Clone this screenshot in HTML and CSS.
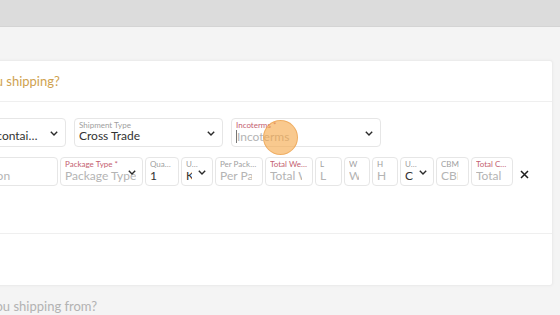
FILE: index.html
```html
<!DOCTYPE html>
<html lang="en">
<head>
    <meta charset="UTF-8">
    <meta name="viewport" content="width=device-width, initial-scale=1.0">
    <title>Shipment Quote</title>
    <link rel="stylesheet" href="styles.css">
</head>
<body>
<div id="topbar"></div>
<div id="page">
    <div class="card">
        <div class="card-head">What are you shipping?</div>
        <div class="card-body">
            <div class="row row-main">
                <div class="field select f-load">
                    <label>Load Type</label>
                    <div class="value">Less than container load</div>
                    <svg class="chevron" width="8" height="5" viewBox="0 0 8 5"><polyline points="0.8,0.8 4,4 7.2,0.8"/></svg>
                </div>
                <div class="field select f-shipment">
                    <label>Shipment Type</label>
                    <div class="value">Cross Trade</div>
                    <svg class="chevron" width="8" height="5" viewBox="0 0 8 5"><polyline points="0.8,0.8 4,4 7.2,0.8"/></svg>
                </div>
                <div class="field select f-incoterms">
                    <label class="required">Incoterms *</label>
                    <input class="value caret" placeholder="Incoterms">
                    <svg class="chevron" width="8" height="5" viewBox="0 0 8 5"><polyline points="0.8,0.8 4,4 7.2,0.8"/></svg>
                </div>
            </div>
            <div class="row row-items">
                <div class="field f-desc">
                    <label>Item</label>
                    <input class="value" placeholder="Description">
                </div>
                <div class="field select f-package">
                    <label class="required">Package Type *</label>
                    <input class="value" placeholder="Package Type">
                    <svg class="chevron" width="8" height="5" viewBox="0 0 8 5"><polyline points="0.8,0.8 4,4 7.2,0.8"/></svg>
                </div>
                <div class="field f-qty">
                    <label>Quantity</label>
                    <input class="value" value="1">
                </div>
                <div class="field select f-unit">
                    <label>Unit</label>
                    <input class="value" value="KG">
                    <svg class="chevron" width="8" height="5" viewBox="0 0 8 5"><polyline points="0.8,0.8 4,4 7.2,0.8"/></svg>
                </div>
                <div class="field f-perpack">
                    <label>Per Package Weight</label>
                    <input class="value" placeholder="Per Package">
                </div>
                <div class="field f-totalw">
                    <label class="required">Total Weight *</label>
                    <input class="value" placeholder="Total Weight">
                </div>
                <div class="field f-dim f-len">
                    <label>L</label>
                    <input class="value" placeholder="L">
                </div>
                <div class="field f-dim">
                    <label>W</label>
                    <input class="value" placeholder="W">
                </div>
                <div class="field f-dim">
                    <label>H</label>
                    <input class="value" placeholder="H">
                </div>
                <div class="field select f-unit f-unit2">
                    <label>Unit</label>
                    <input class="value" value="CM">
                    <svg class="chevron" width="8" height="5" viewBox="0 0 8 5"><polyline points="0.8,0.8 4,4 7.2,0.8"/></svg>
                </div>
                <div class="field f-cbm">
                    <label>CBM</label>
                    <input class="value" placeholder="CBM">
                </div>
                <div class="field f-totalc">
                    <label class="required">Total CBM *</label>
                    <input class="value" placeholder="Total CBM">
                </div>
                <button class="remove">
                    <svg width="9" height="9" viewBox="0 0 9 9"><path d="M1 1 L8 8 M8 1 L1 8"/></svg>
                </button>
            </div>
        </div>
        <div class="card-foot"></div>
    </div>
    <div class="next-section">Where are you shipping from?</div>
</div>
<!-- click highlight -->
<div class="click-dot"></div>
</body>
</html>
```

FILE: styles.css
```css
body {
    font-family: 'Lato', 'Open Sans', sans-serif;
    background-color: #f4f4f4;
    margin: 0;
    padding: 0;
    overflow: hidden;
}

#topbar {
    height: 26px;
    background-color: #dcdcdc;
    border-bottom: 1px solid #d4d4d4;
}

#page {
    margin: 33px 7px 0 -80px;
}

.card {
    background-color: #fff;
    border: 1px solid #ececec;
    border-radius: 3px;
    box-shadow: 0 0 3px rgba(0, 0, 0, 0.04);
}

.card-head {
    height: 40px;
    line-height: 40px;
    padding: 0 12px 0 5px;
    font-size: 13px;
    color: #cfa24f;
    border-bottom: 1px solid #efefef;
}

.card-body {
    padding: 16px 12px 47px;
    border-bottom: 1px solid #efefef;
}

.card-foot {
    height: 51px;
}

.row {
    display: flex;
    align-items: center;
}

.row-main {
    gap: 8px;
    margin-bottom: 10px;
}

.row-items {
    gap: 2px;
}

.field {
    position: relative;
    height: 29px;
    box-sizing: border-box;
    border: 1px solid #e6e6e6;
    border-radius: 4px;
    padding: 1px 4px 0;
    flex-shrink: 0;
    overflow: hidden;
}

.field label {
    display: block;
    font-size: 8px;
    line-height: 10px;
    color: #a0a0a0;
    white-space: nowrap;
    overflow: hidden;
    text-overflow: ellipsis;
}

.field label.required {
    color: #c4606f;
}

.field .value {
    display: block;
    width: 100%;
    box-sizing: border-box;
    border: none;
    outline: none;
    padding: 0;
    margin: 0;
    background: transparent;
    font-family: inherit;
    font-size: 12px;
    line-height: 12px;
    height: 13px;
    color: #333;
    white-space: nowrap;
    overflow: hidden;
    text-overflow: ellipsis;
}

.field input.value {
    text-overflow: clip;
}

.row-items input.value {
    padding-right: 6px;
}

.field .value::placeholder {
    color: #b4b4b4;
}

.row-main .select .value {
    padding-right: 20px;
}

.caret {
    border-left: 1px solid #777 !important;
}

.chevron {
    position: absolute;
    right: 7px;
    top: 50%;
    margin-top: -2px;
    fill: none;
    stroke: #2a2a2a;
    stroke-width: 1.4;
}

.row-items .chevron {
    right: 6px;
}

.f-load {
    width: 133px;
    padding-left: 10px;
}
.f-shipment { width: 149px; }
.f-incoterms { width: 150px; }

.f-desc {
    width: 125px;
    padding-left: 15px;
}
.f-package { width: 83px; }
.f-qty { width: 34px; }
.f-unit { width: 32px; }
.f-perpack { width: 48px; }
.f-totalw { width: 48px; }
.f-dim { width: 26px; }
.f-len { width: 27px; }
.f-unit2 { width: 34px; }
.f-cbm { width: 33px; }
.f-totalc { width: 42px; }

.row-items .f-package .value {
    padding-right: 2px;
}

.f-unit label {
    padding-right: 10px;
}

.row-items .f-unit .value {
    padding-right: 16px;
}

.remove {
    margin: 6px 0 0 5px;
    padding: 0;
    border: none;
    background: none;
    width: 9px;
    height: 9px;
    cursor: pointer;
}

.remove svg {
    display: block;
    stroke: #1e1e1e;
    stroke-width: 1.5;
}

.next-section {
    height: 40px;
    line-height: 40px;
    padding: 0 12px 0 6px;
    font-size: 13px;
    color: #b2b2b2;
}

.click-dot {
    position: absolute;
    left: 263px;
    top: 120px;
    width: 35px;
    height: 35px;
    box-sizing: border-box;
    border-radius: 50%;
    background-color: rgba(246, 168, 72, 0.62);
    border: 1px solid rgba(232, 150, 60, 0.55);
}
```
